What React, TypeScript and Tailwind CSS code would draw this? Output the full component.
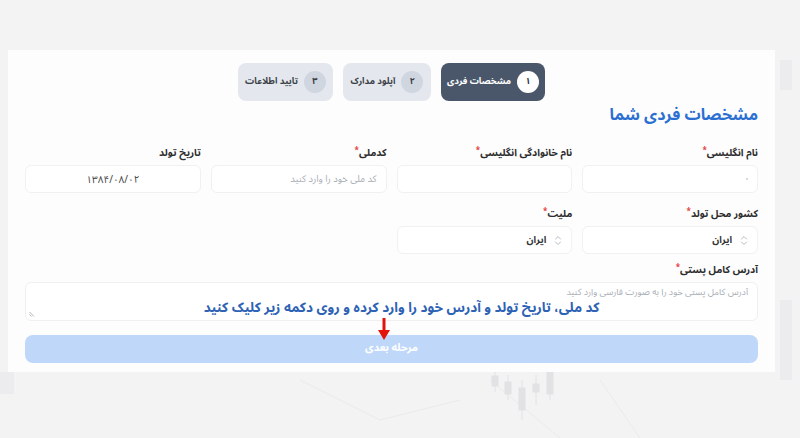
import React from "react";

const font = { fontFamily: '"Noto Sans Arabic", "DejaVu Sans", sans-serif' };

function Label({ text, req = true }: { text: string; req?: boolean }) {
  return (
    <div className="h-[14px] flex items-center text-[10px] font-bold text-[#2d2d2d] leading-none">
      <span>{text}</span>
      {req && <span className="text-[#e53e3e] text-[8px] self-start mt-[1px]">*</span>}
    </div>
  );
}

function UpDown() {
  return (
    <svg width="8" height="11" viewBox="0 0 8 11" fill="none" stroke="#b5b9c0" strokeWidth="1" strokeLinecap="round" strokeLinejoin="round">
      <path d="M1.5 4 L4 1.5 L6.5 4" />
      <path d="M1.5 7 L4 9.5 L6.5 7" />
    </svg>
  );
}

function Input({ children, className = "" }: { children?: React.ReactNode; className?: string }) {
  return (
    <div className={"h-[28px] rounded-[6px] border border-[#f0f1f3] bg-white flex items-center px-[9px] text-[9.5px] " + className}>
      {children}
    </div>
  );
}

function Step({ n, text, active, w }: { n: string; text: string; active?: boolean; w: string }) {
  return (
    <div
      className={
        "h-[38px] rounded-[8px] flex items-center justify-center gap-[6px] px-[8px] shrink-0 " +
        w +
        (active ? " bg-[#4a576b] text-white" : " bg-[#e4e8ee] text-[#3a3f47]")
      }
    >
      <div
        className={
          "w-[22px] h-[22px] shrink-0 rounded-full flex items-center justify-center text-[9px] font-bold " +
          (active ? "bg-white text-[#2d3748]" : "bg-[#cfd6e0] text-[#3a3f47]")
        }
      >
        {n}
      </div>
      <span className="text-[9px] font-bold whitespace-nowrap">{text}</span>
    </div>
  );
}

export default function App() {
  return (
    <div dir="rtl" style={font} className="relative w-[800px] h-[438px] bg-[#f3f3f4] overflow-hidden">
      {/* faint background chart */}
      <svg className="absolute left-0 top-0" width="800" height="438" viewBox="0 0 800 438">
        <g stroke="#eaeaec" strokeWidth="1" fill="none">
          <path d="M300 380 L380 420 L460 400" />
          <path d="M490 380 L560 438" />
          <path d="M600 380 L640 438" />
        </g>
        <g fill="#e2e2e4" stroke="#e2e2e4">
          <line x1="495" y1="372" x2="495" y2="392" />
          <rect x="492" y="376" width="6" height="10" />
          <line x1="508" y1="375" x2="508" y2="400" />
          <rect x="505" y="382" width="6" height="12" />
          <line x1="522" y1="380" x2="522" y2="420" />
          <rect x="519" y="388" width="6" height="22" />
          <line x1="536" y1="375" x2="536" y2="405" />
          <rect x="533" y="384" width="6" height="8" />
          <line x1="550" y1="372" x2="550" y2="400" />
          <rect x="547" y="372" width="6" height="22" />
          <rect x="0" y="372" width="14" height="22" fill="#ececee" stroke="none" />
          <rect x="780" y="60" width="12" height="30" fill="#ececee" stroke="none" />
          <rect x="780" y="300" width="12" height="80" fill="#ececee" stroke="none" />
        </g>
      </svg>

      <div className="relative pt-[50px] pl-[8px] pr-[25px]">
        <div className="relative h-[322px] bg-[#fdfdfd] pt-[13px] px-[17px]">
          {/* stepper */}
          <div className="flex justify-center gap-[10px]">
            <Step n="۱" text="مشخصات فردی" active w="w-[104px]" />
            <Step n="۲" text="آپلود مدارک" w="w-[88px]" />
            <Step n="۳" text="تایید اطلاعات" w="w-[95px]" />
          </div>

          <h2 className="mt-[4px] h-[20px] flex items-center text-[16px] font-bold text-[#2a6fd1] leading-none">
            مشخصات فردی شما
          </h2>

          {/* row 1 */}
          <div className="mt-[21px] grid grid-cols-4 gap-x-[10px]">
            <div>
              <Label text="نام انگلیسی" />
              <Input className="mt-[5px]">
                <span className="w-[2px] h-[2px] rounded-full bg-[#c9ccd1]" />
              </Input>
            </div>
            <div>
              <Label text="نام خانوادگی انگلیسی" />
              <Input className="mt-[5px]" />
            </div>
            <div>
              <Label text="کدملی" />
              <Input className="mt-[5px] text-[#a8adb5]">کد ملی خود را وارد کنید</Input>
            </div>
            <div>
              <Label text="تاریخ تولد" req={false} />
              <Input className="mt-[5px] justify-center text-[#444] text-[10px]">۱۳۸۴/۰۸/۰۲</Input>
            </div>
          </div>

          {/* row 2 */}
          <div className="mt-[14px] grid grid-cols-4 gap-x-[10px]">
            <div>
              <Label text="کشور محل تولد" />
              <Input className="mt-[5px] gap-[8px] text-[#333] font-bold">
                <UpDown />
                <span>ایران</span>
              </Input>
            </div>
            <div>
              <Label text="ملیت" />
              <Input className="mt-[5px] gap-[8px] text-[#333] font-bold">
                <UpDown />
                <span>ایران</span>
              </Input>
            </div>
          </div>

          {/* address */}
          <div className="mt-[9px]">
            <Label text="آدرس کامل پستی" />
            <div className="relative mt-[5px] h-[39px] rounded-[6px] border border-[#eef0f2] bg-white px-[9px] pt-[4px] text-[9px] leading-[12px] text-[#a8adb5]">
              آدرس کامل پستی خود را به صورت فارسی وارد کنید
              <svg className="absolute left-[3px] bottom-[3px]" width="6" height="6" viewBox="0 0 6 6" stroke="#9aa0a8" strokeWidth="0.8">
                <line x1="0.5" y1="1" x2="5" y2="5.5" />
                <line x1="0.5" y1="3.5" x2="2.5" y2="5.5" />
              </svg>
            </div>
          </div>

          {/* button */}
          <button className="mt-[14px] w-full h-[28px] rounded-[8px] bg-[#bfd8fa] text-white text-[10.5px] font-bold flex items-center justify-center">
            مرحله بعدی
          </button>

          {/* annotation overlay */}
          <div className="absolute left-0 right-0 top-[250px] flex justify-center pl-[20px]">
            <span className="text-[13.5px] leading-[16px] font-bold text-[#2d62b5] whitespace-nowrap">
              کد ملی، تاریخ تولد و آدرس خود را وارد کرده و روی دکمه زیر کلیک کنید
            </span>
          </div>
          <svg className="absolute left-[369px] top-[268px]" width="14" height="24" viewBox="0 0 14 24">
            <rect x="5.5" y="0" width="3" height="14" fill="#e3120b" />
            <path d="M1 12 L13 12 L7 22 Z" fill="#e3120b" />
          </svg>
        </div>
      </div>
    </div>
  );
}
